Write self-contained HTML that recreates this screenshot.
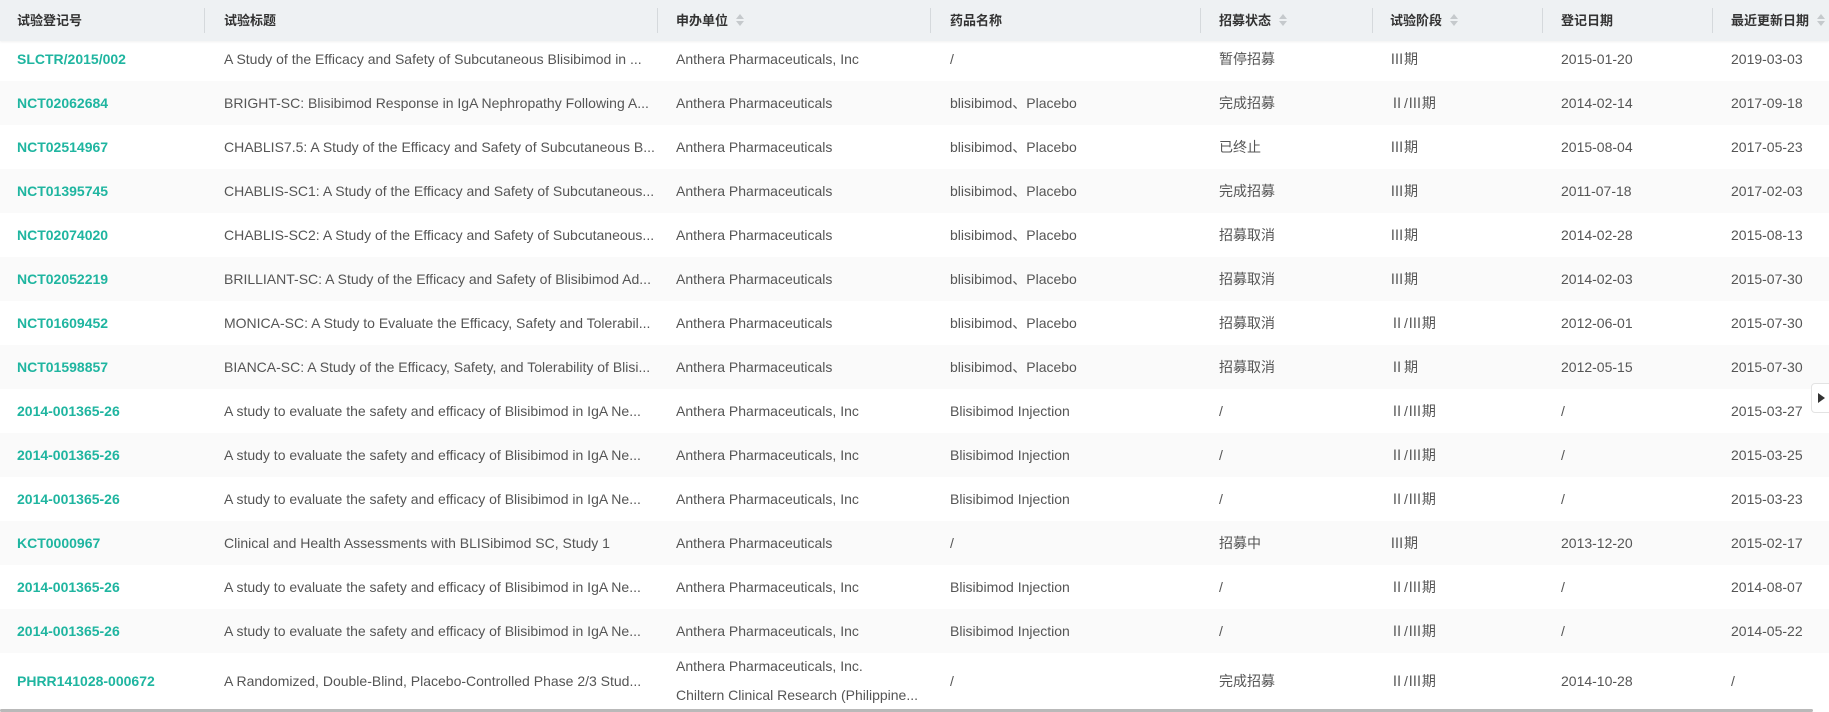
<!DOCTYPE html>
<html><head><meta charset="utf-8"><style>
*{margin:0;padding:0;box-sizing:border-box}
body{width:1829px;height:712px;overflow:hidden;background:#fff;font-family:"Liberation Sans","Noto Sans CJK SC",sans-serif;font-size:14px;color:#555;position:relative}
.hd{position:absolute;left:0;top:0;width:1829px;height:41px;background:#eef1f3;box-shadow:0 1px 2px rgba(0,0,0,.06);z-index:2;font-size:13px}
.hd div{position:absolute;top:0;height:41px;line-height:41px;color:#333;font-weight:bold;white-space:nowrap}
.sep{position:absolute;top:8px;width:1px;height:25px;background:#d5d9dc}
.s{display:inline-block;vertical-align:middle;margin-left:8px;width:8px;height:14px;position:relative;top:-2px}
.s:before{content:"";position:absolute;left:0;top:1px;border:4px solid transparent;border-bottom:5px solid #c5c9cc;border-top:0}
.s:after{content:"";position:absolute;left:0;top:8px;border:4px solid transparent;border-top:5px solid #c5c9cc;border-bottom:0}
.r{position:absolute;left:0;width:1829px}
.r.e{background:#fafafa}
.r div{position:absolute;top:0;height:100%;display:flex;align-items:center;white-space:nowrap}
.r .c1{color:#1fb5a0;font-weight:bold}
.tg{position:absolute;left:1811px;top:383px;width:22px;height:30px;background:#fff;border:1px solid #e3e3e3;border-radius:4px;z-index:3}
.tg:after{content:"";position:absolute;left:6px;top:9px;border:5px solid transparent;border-left:7px solid #333;border-right:0}
.sb{position:absolute;left:0;top:709px;width:1813px;height:3px;background:#b9b9b9;border-radius:2px}
</style></head><body>
<div class="hd">
<div style="left:17px">试验登记号</div>
<div style="left:224px">试验标题</div>
<div style="left:676px">申办单位<span class="s"></span></div>
<div style="left:950px">药品名称</div>
<div style="left:1219px">招募状态<span class="s"></span></div>
<div style="left:1390px">试验阶段<span class="s"></span></div>
<div style="left:1561px">登记日期</div>
<div style="left:1731px">最近更新日期<span class="s"></span></div>
<span class="sep" style="left:204px"></span><span class="sep" style="left:657px"></span><span class="sep" style="left:930px"></span><span class="sep" style="left:1200px"></span><span class="sep" style="left:1372px"></span><span class="sep" style="left:1542px"></span><span class="sep" style="left:1712px"></span>
</div>
<div class="r" style="top:37px;height:44px"><div class="c1" style="left:17px">SLCTR/2015/002</div><div style="left:224px">A Study of the Efficacy and Safety of Subcutaneous Blisibimod in ...</div><div style="left:676px">Anthera Pharmaceuticals, Inc</div><div style="left:950px">/</div><div style="left:1219px">暂停招募</div><div style="left:1390px">Ⅲ期</div><div style="left:1561px">2015-01-20</div><div style="left:1731px">2019-03-03</div></div>
<div class="r e" style="top:81px;height:44px"><div class="c1" style="left:17px">NCT02062684</div><div style="left:224px">BRIGHT-SC: Blisibimod Response in IgA Nephropathy Following A...</div><div style="left:676px">Anthera Pharmaceuticals</div><div style="left:950px">blisibimod、Placebo</div><div style="left:1219px">完成招募</div><div style="left:1390px">Ⅱ/Ⅲ期</div><div style="left:1561px">2014-02-14</div><div style="left:1731px">2017-09-18</div></div>
<div class="r" style="top:125px;height:44px"><div class="c1" style="left:17px">NCT02514967</div><div style="left:224px">CHABLIS7.5: A Study of the Efficacy and Safety of Subcutaneous B...</div><div style="left:676px">Anthera Pharmaceuticals</div><div style="left:950px">blisibimod、Placebo</div><div style="left:1219px">已终止</div><div style="left:1390px">Ⅲ期</div><div style="left:1561px">2015-08-04</div><div style="left:1731px">2017-05-23</div></div>
<div class="r e" style="top:169px;height:44px"><div class="c1" style="left:17px">NCT01395745</div><div style="left:224px">CHABLIS-SC1: A Study of the Efficacy and Safety of Subcutaneous...</div><div style="left:676px">Anthera Pharmaceuticals</div><div style="left:950px">blisibimod、Placebo</div><div style="left:1219px">完成招募</div><div style="left:1390px">Ⅲ期</div><div style="left:1561px">2011-07-18</div><div style="left:1731px">2017-02-03</div></div>
<div class="r" style="top:213px;height:44px"><div class="c1" style="left:17px">NCT02074020</div><div style="left:224px">CHABLIS-SC2: A Study of the Efficacy and Safety of Subcutaneous...</div><div style="left:676px">Anthera Pharmaceuticals</div><div style="left:950px">blisibimod、Placebo</div><div style="left:1219px">招募取消</div><div style="left:1390px">Ⅲ期</div><div style="left:1561px">2014-02-28</div><div style="left:1731px">2015-08-13</div></div>
<div class="r e" style="top:257px;height:44px"><div class="c1" style="left:17px">NCT02052219</div><div style="left:224px">BRILLIANT-SC: A Study of the Efficacy and Safety of Blisibimod Ad...</div><div style="left:676px">Anthera Pharmaceuticals</div><div style="left:950px">blisibimod、Placebo</div><div style="left:1219px">招募取消</div><div style="left:1390px">Ⅲ期</div><div style="left:1561px">2014-02-03</div><div style="left:1731px">2015-07-30</div></div>
<div class="r" style="top:301px;height:44px"><div class="c1" style="left:17px">NCT01609452</div><div style="left:224px">MONICA-SC: A Study to Evaluate the Efficacy, Safety and Tolerabil...</div><div style="left:676px">Anthera Pharmaceuticals</div><div style="left:950px">blisibimod、Placebo</div><div style="left:1219px">招募取消</div><div style="left:1390px">Ⅱ/Ⅲ期</div><div style="left:1561px">2012-06-01</div><div style="left:1731px">2015-07-30</div></div>
<div class="r e" style="top:345px;height:44px"><div class="c1" style="left:17px">NCT01598857</div><div style="left:224px">BIANCA-SC: A Study of the Efficacy, Safety, and Tolerability of Blisi...</div><div style="left:676px">Anthera Pharmaceuticals</div><div style="left:950px">blisibimod、Placebo</div><div style="left:1219px">招募取消</div><div style="left:1390px">Ⅱ期</div><div style="left:1561px">2012-05-15</div><div style="left:1731px">2015-07-30</div></div>
<div class="r" style="top:389px;height:44px"><div class="c1" style="left:17px">2014-001365-26</div><div style="left:224px">A study to evaluate the safety and efficacy of Blisibimod in IgA Ne...</div><div style="left:676px">Anthera Pharmaceuticals, Inc</div><div style="left:950px">Blisibimod Injection</div><div style="left:1219px">/</div><div style="left:1390px">Ⅱ/Ⅲ期</div><div style="left:1561px">/</div><div style="left:1731px">2015-03-27</div></div>
<div class="r e" style="top:433px;height:44px"><div class="c1" style="left:17px">2014-001365-26</div><div style="left:224px">A study to evaluate the safety and efficacy of Blisibimod in IgA Ne...</div><div style="left:676px">Anthera Pharmaceuticals, Inc</div><div style="left:950px">Blisibimod Injection</div><div style="left:1219px">/</div><div style="left:1390px">Ⅱ/Ⅲ期</div><div style="left:1561px">/</div><div style="left:1731px">2015-03-25</div></div>
<div class="r" style="top:477px;height:44px"><div class="c1" style="left:17px">2014-001365-26</div><div style="left:224px">A study to evaluate the safety and efficacy of Blisibimod in IgA Ne...</div><div style="left:676px">Anthera Pharmaceuticals, Inc</div><div style="left:950px">Blisibimod Injection</div><div style="left:1219px">/</div><div style="left:1390px">Ⅱ/Ⅲ期</div><div style="left:1561px">/</div><div style="left:1731px">2015-03-23</div></div>
<div class="r e" style="top:521px;height:44px"><div class="c1" style="left:17px">KCT0000967</div><div style="left:224px">Clinical and Health Assessments with BLISibimod SC, Study 1</div><div style="left:676px">Anthera Pharmaceuticals</div><div style="left:950px">/</div><div style="left:1219px">招募中</div><div style="left:1390px">Ⅲ期</div><div style="left:1561px">2013-12-20</div><div style="left:1731px">2015-02-17</div></div>
<div class="r" style="top:565px;height:44px"><div class="c1" style="left:17px">2014-001365-26</div><div style="left:224px">A study to evaluate the safety and efficacy of Blisibimod in IgA Ne...</div><div style="left:676px">Anthera Pharmaceuticals, Inc</div><div style="left:950px">Blisibimod Injection</div><div style="left:1219px">/</div><div style="left:1390px">Ⅱ/Ⅲ期</div><div style="left:1561px">/</div><div style="left:1731px">2014-08-07</div></div>
<div class="r e" style="top:609px;height:44px"><div class="c1" style="left:17px">2014-001365-26</div><div style="left:224px">A study to evaluate the safety and efficacy of Blisibimod in IgA Ne...</div><div style="left:676px">Anthera Pharmaceuticals, Inc</div><div style="left:950px">Blisibimod Injection</div><div style="left:1219px">/</div><div style="left:1390px">Ⅱ/Ⅲ期</div><div style="left:1561px">/</div><div style="left:1731px">2014-05-22</div></div>
<div class="r" style="top:653px;height:56px"><div class="c1" style="left:17px">PHRR141028-000672</div><div style="left:224px">A Randomized, Double-Blind, Placebo-Controlled Phase 2/3 Stud...</div><div style="left:676px;flex-direction:column;align-items:flex-start;justify-content:center;line-height:29px">Anthera Pharmaceuticals, Inc.<br>Chiltern Clinical Research (Philippine...</div><div style="left:950px">/</div><div style="left:1219px">完成招募</div><div style="left:1390px">Ⅱ/Ⅲ期</div><div style="left:1561px">2014-10-28</div><div style="left:1731px">/</div></div>
<div class="tg"></div>
<div class="sb"></div>
</body></html>
